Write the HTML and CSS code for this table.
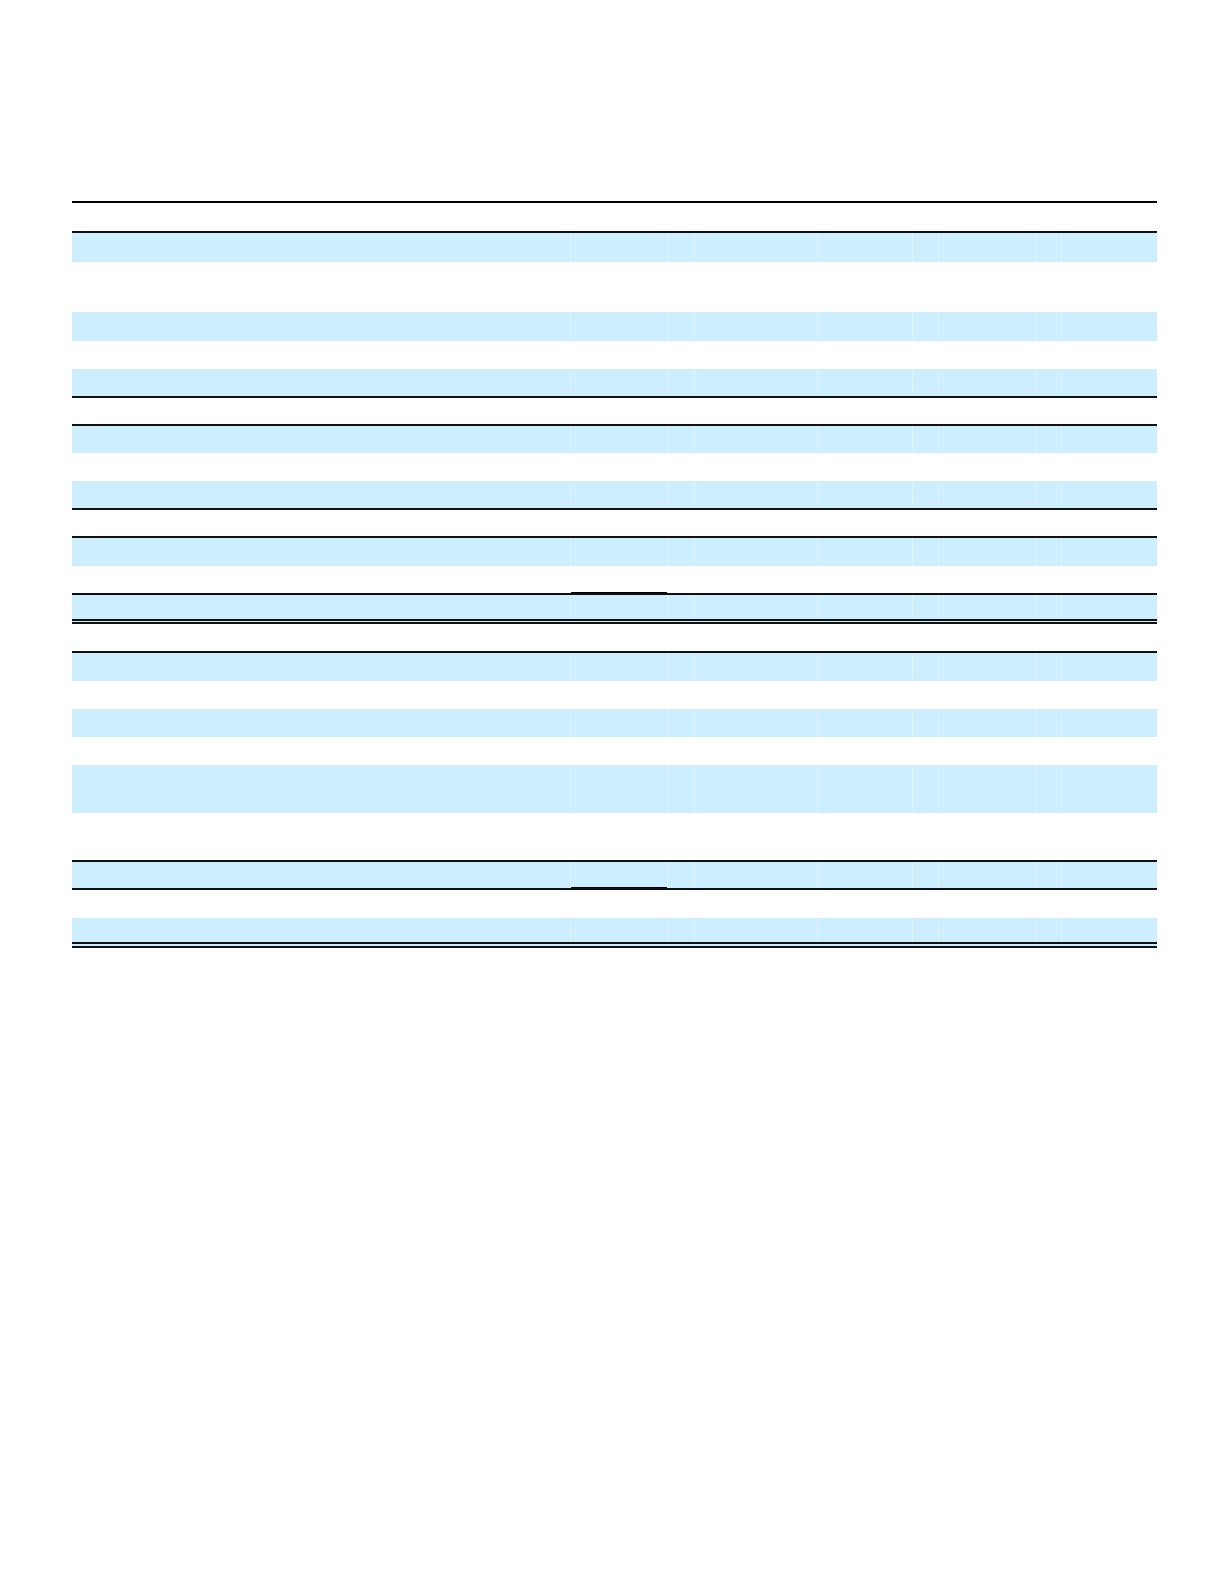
FILE: index.html
```html
<!DOCTYPE html>
<html lang="en">
<head>
<meta charset="utf-8">
<title>Table</title>
<link rel="stylesheet" href="styles.css">
</head>
<body>
<div class="sheet">
  <div class="row h30 rule"><div class="c"></div><div class="c"></div><div class="c"></div><div class="c"></div><div class="c"></div><div class="c"></div><div class="c"></div><div class="c"></div><div class="c"></div></div>
  <div class="row h29 blue"><div class="c"></div><div class="c"></div><div class="c"></div><div class="c"></div><div class="c"></div><div class="c"></div><div class="c"></div><div class="c"></div><div class="c"></div></div>
  <div class="row h50"><div class="c"></div><div class="c"></div><div class="c"></div><div class="c"></div><div class="c"></div><div class="c"></div><div class="c"></div><div class="c"></div><div class="c"></div></div>
  <div class="row h29 blue"><div class="c"></div><div class="c"></div><div class="c"></div><div class="c"></div><div class="c"></div><div class="c"></div><div class="c"></div><div class="c"></div><div class="c"></div></div>
  <div class="row h28"><div class="c"></div><div class="c"></div><div class="c"></div><div class="c"></div><div class="c"></div><div class="c"></div><div class="c"></div><div class="c"></div><div class="c"></div></div>
  <div class="row h29 blue rule"><div class="c"></div><div class="c"></div><div class="c"></div><div class="c"></div><div class="c"></div><div class="c"></div><div class="c"></div><div class="c"></div><div class="c"></div></div>
  <div class="row h28 rule"><div class="c"></div><div class="c"></div><div class="c"></div><div class="c"></div><div class="c"></div><div class="c"></div><div class="c"></div><div class="c"></div><div class="c"></div></div>
  <div class="row h27 blue"><div class="c"></div><div class="c"></div><div class="c"></div><div class="c"></div><div class="c"></div><div class="c"></div><div class="c"></div><div class="c"></div><div class="c"></div></div>
  <div class="row h28"><div class="c"></div><div class="c"></div><div class="c"></div><div class="c"></div><div class="c"></div><div class="c"></div><div class="c"></div><div class="c"></div><div class="c"></div></div>
  <div class="row h29 blue rule"><div class="c"></div><div class="c"></div><div class="c"></div><div class="c"></div><div class="c"></div><div class="c"></div><div class="c"></div><div class="c"></div><div class="c"></div></div>
  <div class="row h28 rule"><div class="c"></div><div class="c"></div><div class="c"></div><div class="c"></div><div class="c"></div><div class="c"></div><div class="c"></div><div class="c"></div><div class="c"></div></div>
  <div class="row h28 blue"><div class="c"></div><div class="c"></div><div class="c"></div><div class="c"></div><div class="c"></div><div class="c"></div><div class="c"></div><div class="c"></div><div class="c"></div></div>
  <div class="row h29 rule"><div class="c"></div><div class="c sum"></div><div class="c"></div><div class="c"></div><div class="c"></div><div class="c"></div><div class="c"></div><div class="c"></div><div class="c"></div></div>
  <div class="row h29 blue double"><div class="c"></div><div class="c"></div><div class="c"></div><div class="c"></div><div class="c"></div><div class="c"></div><div class="c"></div><div class="c"></div><div class="c"></div></div>
  <div class="row h29 rule"><div class="c"></div><div class="c"></div><div class="c"></div><div class="c"></div><div class="c"></div><div class="c"></div><div class="c"></div><div class="c"></div><div class="c"></div></div>
  <div class="row h28 blue"><div class="c"></div><div class="c"></div><div class="c"></div><div class="c"></div><div class="c"></div><div class="c"></div><div class="c"></div><div class="c"></div><div class="c"></div></div>
  <div class="row h28"><div class="c"></div><div class="c"></div><div class="c"></div><div class="c"></div><div class="c"></div><div class="c"></div><div class="c"></div><div class="c"></div><div class="c"></div></div>
  <div class="row h28 blue"><div class="c"></div><div class="c"></div><div class="c"></div><div class="c"></div><div class="c"></div><div class="c"></div><div class="c"></div><div class="c"></div><div class="c"></div></div>
  <div class="row h28"><div class="c"></div><div class="c"></div><div class="c"></div><div class="c"></div><div class="c"></div><div class="c"></div><div class="c"></div><div class="c"></div><div class="c"></div></div>
  <div class="row h48 blue"><div class="c"></div><div class="c"></div><div class="c"></div><div class="c"></div><div class="c"></div><div class="c"></div><div class="c"></div><div class="c"></div><div class="c"></div></div>
  <div class="row h49 rule"><div class="c"></div><div class="c"></div><div class="c"></div><div class="c"></div><div class="c"></div><div class="c"></div><div class="c"></div><div class="c"></div><div class="c"></div></div>
  <div class="row h28 blue rule"><div class="c"></div><div class="c sum"></div><div class="c"></div><div class="c"></div><div class="c"></div><div class="c"></div><div class="c"></div><div class="c"></div><div class="c"></div></div>
  <div class="row h28"><div class="c"></div><div class="c"></div><div class="c"></div><div class="c"></div><div class="c"></div><div class="c"></div><div class="c"></div><div class="c"></div><div class="c"></div></div>
  <div class="row h30 blue double6"><div class="c"></div><div class="c"></div><div class="c"></div><div class="c"></div><div class="c"></div><div class="c"></div><div class="c"></div><div class="c"></div><div class="c"></div></div>
</div>
</body>
</html>
```

FILE: styles.css
```css
html, body {
  margin: 0;
  padding: 0;
  background: #ffffff;
  font-family: "Liberation Sans", Arial, sans-serif;
  font-size: 13px;
}

.sheet {
  width: 1085px;
  margin: 201px 0 0 72px;
  border-top: 2px solid #000000;
}

.row {
  display: grid;
  grid-template-columns: 498px 97px 27px 123px 95px 26px 97px 26px 96px;
  box-sizing: border-box;
}

.row .c {
  box-sizing: border-box;
}

.row .c + .c {
  border-left: 1px solid rgba(255, 255, 255, 0.35);
}

.row .c.sum {
  box-shadow: inset 0 -1px 0 #000000;
}

.blue {
  background: #cceeff;
}

.rule {
  border-bottom: 2px solid #111111;
}

.double {
  border-bottom: 5px double #111111;
}

.double6 {
  border-bottom: 6px double #111111;
}

.h27 { height: 27px; }
.h28 { height: 28px; }
.h29 { height: 29px; }
.h30 { height: 30px; }
.h48 { height: 48px; }
.h49 { height: 49px; }
.h50 { height: 50px; }
```
